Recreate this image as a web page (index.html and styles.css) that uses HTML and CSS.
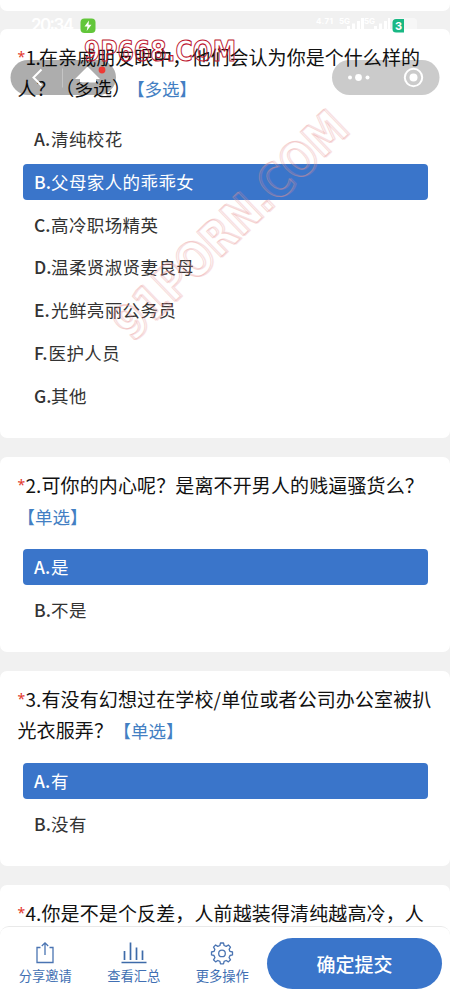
FILE: index.html
```html
<!DOCTYPE html>
<html lang="zh-CN">
<head>
<meta charset="utf-8">
<title>问卷</title>
<link rel="stylesheet" href="styles.css">
</head>
<body>
<main class="survey">
  <section class="card card-previous"></section>

  <section class="card">
    <h2 class="title">
      <span class="line line-first"><i class="req">*</i><b class="no no-narrow">1.</b>在亲戚朋友眼中，他们会认为你是个什么样的</span>
      <span class="line line-tight">人？（多选）<em class="tag tag-far">【多选】</em></span>
    </h2>
    <ul class="options">
      <li class="option"><b class="key">A.</b>清纯校花</li>
      <li class="option selected"><b class="key">B.</b>父母家人的乖乖女</li>
      <li class="option"><b class="key">C.</b>高冷职场精英</li>
      <li class="option"><b class="key">D.</b>温柔贤淑贤妻良母</li>
      <li class="option"><b class="key">E.</b>光鲜亮丽公务员</li>
      <li class="option"><b class="key key-narrow">F.</b>医护人员</li>
      <li class="option"><b class="key">G.</b>其他</li>
    </ul>
  </section>

  <section class="card">
    <h2 class="title">
      <span class="line"><i class="req">*</i><b class="no">2.</b>可你的内心呢？是离不开男人的贱逼骚货么？</span>
      <span class="line"><em class="tag tag-first">【单选】</em></span>
    </h2>
    <ul class="options">
      <li class="option selected"><b class="key">A.</b>是</li>
      <li class="option"><b class="key">B.</b>不是</li>
    </ul>
  </section>

  <section class="card">
    <h2 class="title">
      <span class="line"><i class="req">*</i><b class="no">3.</b>有没有幻想过在学校/单位或者公司办公室被扒</span>
      <span class="line">光衣服弄？<em class="tag">【单选】</em></span>
    </h2>
    <ul class="options">
      <li class="option selected"><b class="key">A.</b>有</li>
      <li class="option"><b class="key">B.</b>没有</li>
    </ul>
  </section>

  <section class="card card-next">
    <h2 class="title">
      <span class="line"><i class="req">*</i><b class="no">4.</b>你是不是个反差，人前越装得清纯越高冷，人</span>
    </h2>
  </section>
</main>

<svg class="overlay" width="450" height="360" viewBox="0 0 450 360">
  <!-- status bar -->
  <text class="clock" x="31" y="31" textLength="43">20:34</text>
  <rect x="80.500" y="18.500" width="15" height="14.500" rx="4" fill="#62c63a"/>
  <path d="M89 20.500l-4.500 6h3l-.8 4.500 4.800-6.300h-3z" fill="#fff"/>
  <g fill="#fff">
    <text class="net" x="316" y="24" textLength="17">4.71</text>
    <text class="net" x="339" y="24">5G</text>
    <text class="net" x="364" y="24">5G</text>
    <path d="M347 26h3v4h-3zM352 23.500h3V30h-3zM357 21h3v9h-3zM361 18h3v12h-3zM374 26h3v4h-3zM379 23.500h3V30h-3zM384 21h3v9h-3zM388 18h2v12h-2z"/>
    <rect x="392" y="18" width="25" height="14" rx="4" opacity=".45"/>
  </g>
  <path d="M404 19v13.500h-8q-3.500 0-3.500-3.500v-6.500q0-3.500 3.500-3.500z" fill="#19b884"/>
  <text class="battery" x="395" y="30">3</text>

  <!-- navigation capsules -->
  <rect x="10.500" y="60" width="105.500" height="35" rx="17.500" fill="#000" opacity=".32"/>
  <path d="M41.500 69.500l-8 8 8 8" fill="none" stroke="#fff" stroke-width="2"/>
  <path d="M62.500 68.500v19" stroke="#fff" opacity=".3"/>
  <path d="M87.500 66.500L100 79h-4v3.500h-16v-3.500h-5z" fill="#fff"/>
  <circle cx="102" cy="70" r="3.400" fill="#ee3a35"/>
  <rect x="332" y="60" width="107.500" height="35" rx="17.500" fill="#000" opacity=".205"/>
  <g fill="#fff"><circle cx="350" cy="77.500" r="2"/><circle cx="358.500" cy="77.500" r="3.400"/><circle cx="367.500" cy="77.500" r="2"/><circle cx="413.500" cy="77.500" r="4"/></g>
  <circle cx="413.500" cy="77.500" r="8.700" fill="none" stroke="#fff" stroke-width="2"/>

  <!-- watermarks -->
  <text class="mark mark-top" x="84" y="61" textLength="152" lengthAdjust="spacingAndGlyphs">9P668.COM</text>
  <g transform="translate(132 343) rotate(-44)">
    <text class="mark mark-shadow" x="1.500" y="1" textLength="304" lengthAdjust="spacingAndGlyphs">91PORN.COM</text>
    <text class="mark mark-large" x="0" y="0" textLength="304" lengthAdjust="spacingAndGlyphs">91PORN.COM</text>
  </g>
</svg>

<footer class="toolbar">
  <nav class="actions">
    <a class="action">
      <svg width="26" height="26" viewBox="0 0 26 26" fill="none" stroke="#4a74b2" stroke-width="1.300"><path d="M8.500 6.500H5v15h16v-15h-3.500M13 14V2M9.800 5L13 1.800 16.200 5"/></svg>
      <span>分享邀请</span>
    </a>
    <a class="action">
      <svg width="26" height="26" viewBox="0 0 26 26" fill="none" stroke="#3e6ba9" stroke-width="1.700"><path d="M3.500 19V10M9.500 19V1.500M15.500 19V6.500M21.500 19V9.500M.5 21.500h25"/></svg>
      <span>查看汇总</span>
    </a>
    <a class="action">
      <svg width="26" height="26" viewBox="0 1.500 26 26" fill="none" stroke="#4a74b2" stroke-width="1.300" stroke-linejoin="round"><path d="M11.500 3.500h3l.6 2.500 2.100.9 2.200-1.400 2.100 2.100-1.400 2.200.9 2.100 2.500.6v2.900l-2.500.6-.9 2.100 1.400 2.200-2.100 2.100-2.200-1.400-2.100.9-.6 2.500h-3l-.6-2.500-2.100-.9-2.200 1.400-2.100-2.100 1.400-2.200-.9-2.100-2.500-.6v-2.900l2.500-.6.9-2.100-1.400-2.200 2.100-2.100 2.200 1.400 2.100-.9z"/><circle cx="13" cy="13.900" r="3.300"/></svg>
      <span>更多操作</span>
    </a>
  </nav>
  <button class="submit">确定提交</button>
</footer>
</body>
</html>
```
FILE: styles.css
```css
* { box-sizing: border-box; }

body {
  margin: 0;
  height: 1000px;
  overflow: hidden;
  position: relative;
  background: #f1f1f1;
  font-family: "Noto Sans CJK SC", sans-serif;
}

.survey {
  display: flex;
  flex-direction: column;
  gap: 19px;
}

.card {
  background: #fff;
  border-radius: 7px;
  padding: 12px 22.5px 24px;
  height: 195px;
  flex: none;
}

.card:nth-child(2) { height: 409px; }
.card.card-previous { height: 11px; padding: 0; border-radius: 0 0 7px 7px; margin-bottom: -1px; }
.card.card-next { height: 130px; }

.title {
  margin: 0 -5px 18px;
  font-size: 19px;
  font-weight: 400;
  line-height: 31px;
  letter-spacing: 0.12px;
  color: #111;
}

.line { display: block; height: 31px; white-space: nowrap; }
.line-first { letter-spacing: 0.05px; }
.line-tight { letter-spacing: -0.1px; }

.req {
  display: inline-block;
  width: 8px;
  font: 14px/16px "Noto Sans", sans-serif;
  vertical-align: 3px;
  color: #e2362c;
}

.no {
  display: inline-block;
  width: 16px;
  font-weight: 400;
  letter-spacing: 0;
}

.no-narrow { width: 13.5px; letter-spacing: -0.6px; }

.tag {
  margin-left: 0.5px;
  font-size: 17.5px;
  font-style: normal;
  letter-spacing: 0;
  color: #437fc3;
}

.tag-first { margin-left: 0; }
.tag-far { margin-left: 5px; letter-spacing: -0.1px; }

.options {
  display: flex;
  flex-direction: column;
  gap: 6.75px;
  margin: 0;
  padding: 0;
  list-style: none;
}

.option {
  height: 36px;
  padding-left: 11.5px;
  border-radius: 4px;
  font-size: 17.5px;
  line-height: 35px;
  letter-spacing: 0.4px;
  color: #333;
  white-space: nowrap;
}

.key {
  display: inline-block;
  width: 17px;
  font-weight: 500;
  letter-spacing: 0;
}

.key-narrow { width: 14.5px; }

.selected { background: #3a75ca; color: #fff; }

.overlay {
  position: absolute;
  top: 0;
  left: 0;
  pointer-events: none;
}

.clock { font: 600 17px Inter, sans-serif; fill: #fff; }
.net { font: 700 8px Inter, sans-serif; fill: #fff; }
.battery { font: 700 11px Inter, sans-serif; fill: #fff; }

.mark { font-family: "DejaVu Sans", sans-serif; font-weight: 700; stroke-linejoin: round; }
.mark-top { font-size: 28px; fill: none; stroke: #bd1830; stroke-width: 1.1; }
.mark-shadow { font-size: 48px; fill: none; stroke: #e78a8a; stroke-width: 1.6; opacity: 0.25; }
.mark-large { font-size: 48px; fill: none; stroke: #e99b9b; stroke-width: 1; opacity: 0.4; }

.toolbar {
  position: absolute;
  left: 0;
  right: 0;
  bottom: 0;
  height: 74px;
  display: flex;
  align-items: flex-start;
  justify-content: space-between;
  padding: 12px 8px 0 1px;
  background: #fff;
  border-top: 1px solid #e9e9e9;
  border-radius: 9px 9px 0 0;
}

.actions { display: flex; padding-top: 2px; }

.action {
  width: 88.5px;
  display: flex;
  flex-direction: column;
  align-items: center;
  font-size: 13.3px;
  line-height: 18px;
  color: #416fb3;
}

.submit {
  width: 175px;
  height: 51px;
  margin-top: -1px;
  padding: 0;
  border: 0;
  border-radius: 26px;
  background: #3a75ca;
  color: #fff;
  font: 500 19px/49px "Noto Sans CJK SC", sans-serif;
}
```
